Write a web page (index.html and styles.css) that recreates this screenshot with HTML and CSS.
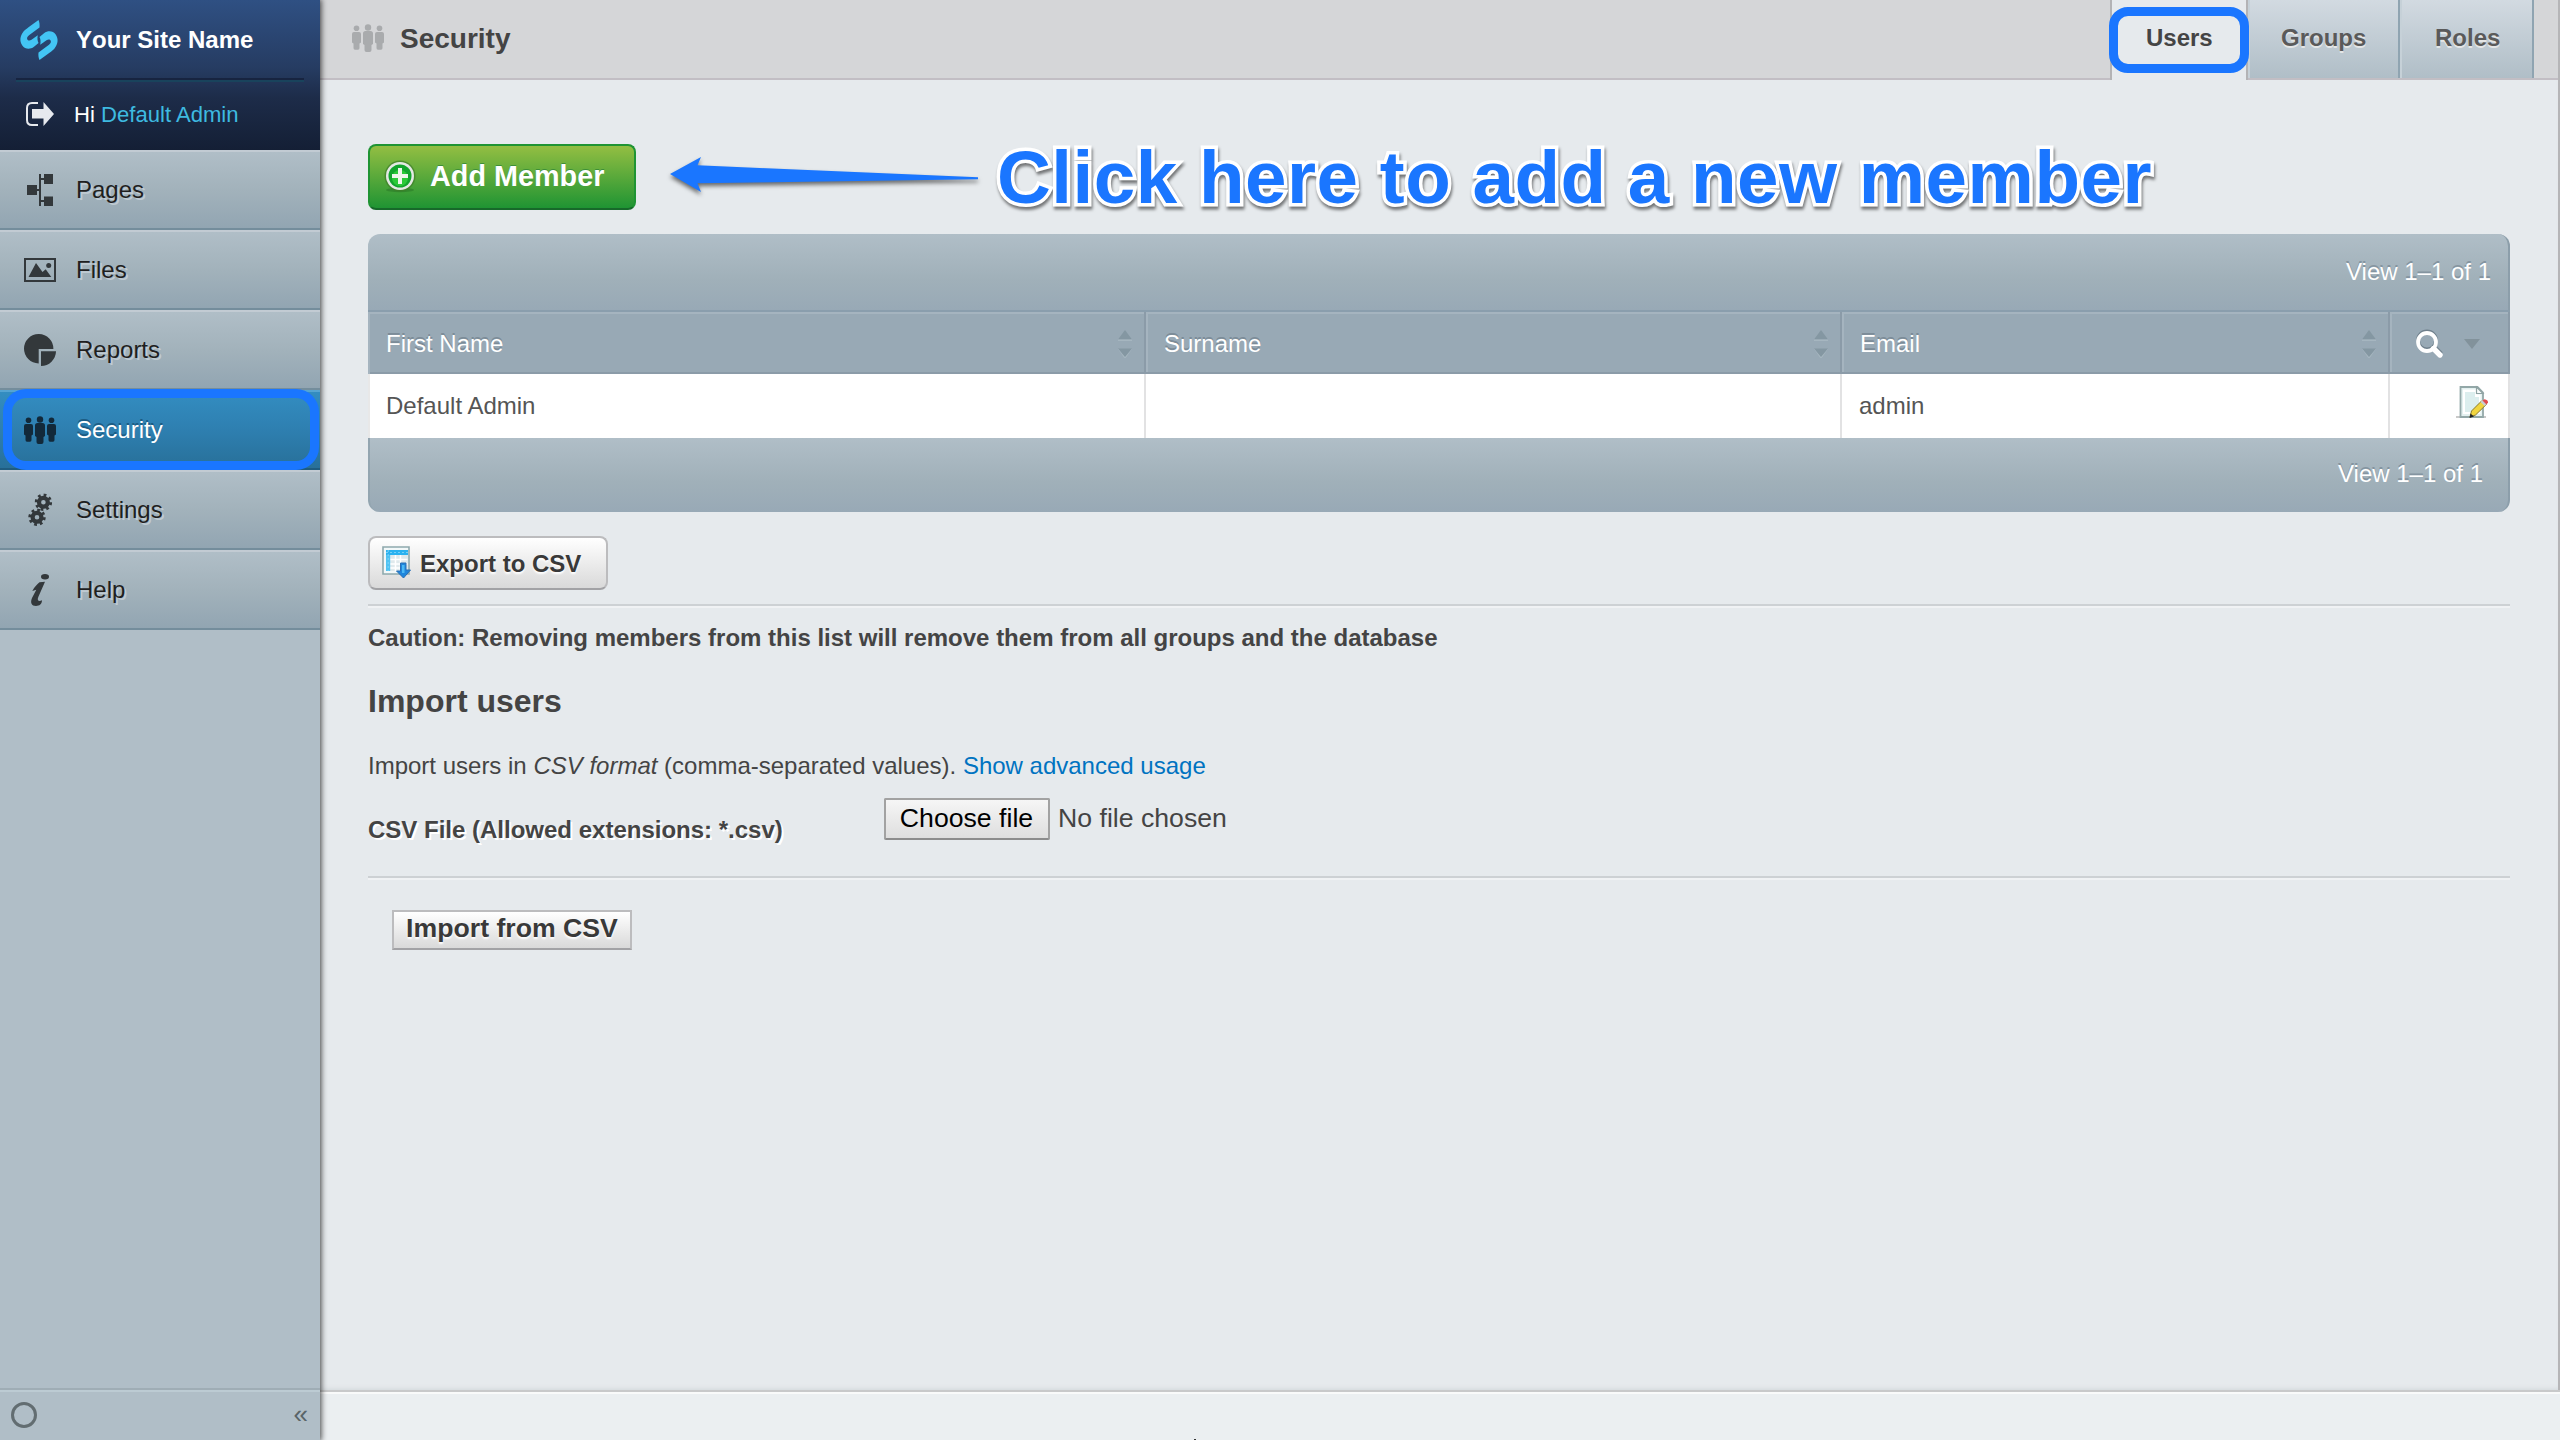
FILE: index.html
```html
<!DOCTYPE html>
<html lang="en">
<head>
<meta charset="utf-8">
<title>Security</title>
<link rel="stylesheet" href="styles.css">
</head>
<body>
<svg class="defs" width="0" height="0" aria-hidden="true">
  <symbol id="people" viewBox="0 0 32 32">
    <circle cx="4.5" cy="6.3" r="2.8"/><path d="M0 12q0-2 2-2h5q2 0 2 2v8.5l-1.5 1v4.5q0 1.7-1.5 1.7h-3q-1.500 0-1.500-1.700v-4.500l-1.500-1z"/>
    <circle cx="16" cy="5.500" r="3.200"/><path d="M11 11.500q0-2.500 2.500-2.500h5q2.500 0 2.500 2.500v10.500l-1.500 1v5q0 2-2 2h-3q-2 0-2-2v-5l-1.500-1z"/>
    <circle cx="27.500" cy="6.300" r="2.800"/><path d="M23 12q0-2 2-2h5q2 0 2 2v8.500l-1.500 1v4.500q0 1.700-1.500 1.700h-3q-1.500 0-1.500-1.700v-4.500l-1.500-1z"/>
  </symbol>
  <symbol id="sort" viewBox="0 0 14 28"><path d="M0 9.500L7 0l7 9.500z" fill="#8497a2"/><path d="M0 9.500h14v1.500H0zM0 19l7 10 7-10z" fill="#a6b6c0"/><path d="M0 18.500h14L7 27z" fill="#8497a2"/></symbol>
  <symbol id="gear" viewBox="0 0 18 18">
    <circle cx="9" cy="9" r="4.400" fill="none" stroke="#33383b" stroke-width="4.200"/>
    <circle cx="9" cy="9" r="7.200" fill="none" stroke="#33383b" stroke-width="3" stroke-dasharray="2.700 2.955"/>
  </symbol>
</svg>
<aside class="sidebar">
  <header class="brand">
    <div class="site">
      <svg class="logo" width="38" height="40" viewBox="19.500 20 38 40" fill="#43c5f4"><path id="hook" d="M38 20C39 22 39.300 25 39 27.500L28.500 35.300C24.500 38.500 27.500 42.200 31 39.800L37.300 35.300C36.600 38.600 37 41 38 43L33.500 46.700C29.500 49.800 24.500 49.200 21.800 45.500C18.800 41 19.500 36 23 31.500C24 30.300 26 28.700 28 27.200Z"/><use href="#hook" transform="rotate(180 38.500 40)"/></svg>
      <span>Your Site Name</span>
    </div>
    <div class="login">
      <svg width="30" height="26" viewBox="25 101 30 26"><path d="M38 103h-6q-5 0-5 5v12q0 5 5 5h6" fill="none" stroke="#e6e9ee" stroke-width="2"/><path d="M32 109h11.500v-7L54 114 43.500 126v-7.500H32z" fill="#e6e9ee"/></svg>
      <span>Hi <a>Default Admin</a></span>
    </div>
  </header>
  <nav class="menu">
    <a class="item"><svg viewBox="24 174 32 32"><path d="M27 185h10v10H27zM44 174h9v10h-9zM44 196.500h9v9.500h-9zM39 174h2v32h-2zM37 189h2v2h-2zM41 178h3v2h-3zM41 200h3v2h-3z"/></svg>Pages</a>
    <a class="item"><svg viewBox="24 254 32 32"><path d="M25 259h30v22H25z" fill="none" stroke="#33383b" stroke-width="2"/><path d="M28.500 277L36 263l6.500 9 3.200-2.800L51.300 277z"/><circle cx="48.700" cy="265.500" r="2.500"/></svg>Files</a>
    <a class="item"><svg viewBox="24 334 32 32"><path d="M38.700 349h14.700A14.700 14.700 0 1 0 38.700 363.400z"/><path d="M41 351.300h15A15 15 0 0 1 41 366z"/></svg>Reports</a>
    <a class="item active"><svg><use href="#people"/></svg>Security</a>
    <a class="item"><svg viewBox="24 494 32 32"><use href="#gear" x="34.400" y="493.300" width="18" height="18"/><use href="#gear" x="28" y="508.300" width="18" height="18"/></svg>Settings</a>
    <a class="item"><svg viewBox="24 574 32 32"><ellipse cx="45" cy="576.700" rx="4" ry="2.700"/><path d="M32.300 591C34.500 586.500 37.500 584 39.500 582.200L45 581.800 38.300 597C36.700 600.800 39 601.600 42 600.300C42 604 39.500 606 36 606C31.500 606 30 602.500 32 598L36.300 589.800z"/></svg>Help</a>
  </nav>
  <footer class="dock"><i class="ring"></i><span>«</span></footer>
</aside>
<div class="main">
  <header class="topbar">
    <svg class="crumb" width="32" height="32"><use href="#people"/></svg>
    <h1>Security</h1>
    <nav class="tabs"><a class="tab current">Users</a><a class="tab">Groups</a><a class="tab">Roles</a></nav>
  </header>
  <main class="content">
    <button class="btn add">
      <svg width="32" height="32" viewBox="0 0 32 32"><ellipse cx="16" cy="30" rx="14" ry="2.200" fill="#2c7a28" opacity=".6"/><circle cx="16" cy="16" r="15.500" fill="#3f7d2a" opacity=".7"/><circle cx="16" cy="16" r="14" fill="#e4e9e4"/><circle cx="16" cy="16" r="11.500" fill="#12a52d"/><circle cx="16" cy="18" r="8" fill="#2bc938"/><path d="M16 8v16M8 16h16" stroke="#eef6ec" stroke-width="4"/></svg>
      Add Member
    </button>
    <section class="grid">
      <div class="bar top">View 1–1 of 1</div>
      <div class="row head">
        <div class="cell">First Name<svg class="sort"><use href="#sort"/></svg></div>
        <div class="cell">Surname<svg class="sort"><use href="#sort"/></svg></div>
        <div class="cell">Email<svg class="sort"><use href="#sort"/></svg></div>
        <div class="cell tools">
          <svg width="28" height="30" viewBox="0 0 28 30"><g fill="none" stroke="#6f808c" stroke-width="4"><circle cx="11" cy="11.500" r="9"/><path d="M18 18l7 7" stroke-width="5"/></g><g fill="none" stroke="#fff" stroke-width="3.800"><circle cx="11" cy="13" r="9"/><path d="M17.500 19.500l6.500 6.500" stroke-width="5.400" stroke-linecap="round"/></g></svg>
          <svg width="16" height="10" viewBox="0 0 16 10"><path d="M0 0h16L8 10z" fill="#82929b"/></svg>
        </div>
      </div>
      <div class="row data">
        <div class="cell">Default Admin</div>
        <div class="cell"></div>
        <div class="cell">admin</div>
        <div class="cell edit">
          <svg width="32" height="32" viewBox="0 0 32 32"><path d="M0 31h30" stroke="#c9c9c9" stroke-width="2"/><path d="M4.500 1h17L27 6.500V31H4.500z" fill="#e4f1f0" stroke="#93a8a8" stroke-width="1.800"/><path d="M7 3.500h13.500v5h4V28H7z" fill="#fff"/><path d="M9 6h10v5h4v15H9z" fill="#dceeee"/><path d="M20.500 1v6.500H27z" fill="#f8fbfb" stroke="#8fa3a3" stroke-width="1.200"/><path d="M14 31l1.500-6L26 14.500l4.500 3.800L19.500 29z" fill="#f0d53f" stroke="#8a7a2a" stroke-width="1"/><path d="M13.500 32l1-4.500 3.500 3z" fill="#222"/><path d="M24.500 16l2-2 4.200 4-2 2z" fill="#c9ccd2"/><path d="M26.500 14.500l2-1.200q3.500.5 3.500 3.200l-1.500 2z" fill="#e14a4e"/></svg>
        </div>
      </div>
      <div class="bar foot">View 1–1 of 1</div>
    </section>
    <button class="btn export">
      <svg width="30" height="34" viewBox="0 0 30 34"><path d="M1 1h26v27H1z" fill="#f2f8f9" stroke="#8fa9ad" stroke-width="1.600"/><path d="M4 4h22v5H4z" fill="#2bb2f0"/><path d="M4 9h4.500v16H4z" fill="#4fc3f3"/><path d="M8.500 9H26v16H8.500z" fill="#dfe9ec"/><path d="M4 6.500h22M6.200 4v21" stroke="#8ad8f8" stroke-width=".8" stroke-dasharray="2 2"/><path d="M8.500 13.500h17M8.500 18h17M8.500 22h12M13.500 9v16M18.500 9v16" stroke="#fff" stroke-width="1.500"/><path d="M18.500 17h5.500v7h4.500L21.500 32 14.500 25h4z" fill="#1f86dc" stroke="#2a6fb4" stroke-width="1"/><path d="M20 19h2.500v8H20z" fill="#4cb9f5"/></svg>
      <span>Export to CSV</span>
    </button>
    <hr>
    <p class="caution">Caution: Removing members from this list will remove them from all groups and the database</p>
    <h3>Import users</h3>
    <p class="hint">Import users in <em>CSV format</em> (comma-separated values). <a>Show advanced usage</a></p>
    <div class="field">
      <label>CSV File (Allowed extensions: *.csv)</label>
      <div class="file"><button class="choose">Choose file</button><span>No file chosen</span></div>
    </div>
    <hr class="second">
    <button class="import">Import from CSV</button>
  </main>
  <footer class="status"><i></i></footer>
</div>
<div class="mark mark-users"></div>
<div class="mark mark-security"></div>
<svg class="arrow" width="320" height="50" viewBox="665 150 320 50"><path d="M670 174L701 157 697.500 165.300 978 177.300V179.300L697.500 183.300 701 192z" fill="#1a76ff"/></svg>
<div class="callout">Click here to add a new member</div>
</body>
</html>
```
FILE: styles.css
```css
* { box-sizing: border-box; }
body {
  margin: 0;
  width: 2560px;
  height: 1440px;
  display: flex;
  overflow: hidden;
  position: relative;
  font: 24px/36px "Liberation Sans", Arial, sans-serif;
  color: #444;
  background: #e6eaed;
}
.defs { position: absolute; }
svg { display: block; flex: none; overflow: visible; }
h1, h3, p { margin: 0; }
button { font-family: inherit; margin: 0; }

/* sidebar */
.sidebar {
  width: 320px;
  flex: none;
  display: flex;
  flex-direction: column;
  background: #b0bec7;
  box-shadow: 0 0 6px 1px rgba(0, 0, 0, .75);
  position: relative;
  z-index: 1;
}
.brand {
  height: 150px;
  padding: 0 16px;
  color: #fff;
  background: linear-gradient(#2f5083, #263c62 45%, #1d2c49 65%, #141f35);
}
.site {
  height: 82px;
  display: flex;
  align-items: center;
  gap: 18px;
  padding: 0 0 1px 4px;
  border-bottom: 2px solid #19435c;
  box-shadow: inset 0 -2px #172440;
  font-weight: bold;
  font-kerning: none;
}
.login {
  display: flex;
  align-items: center;
  gap: 19px;
  height: 64px;
  padding-left: 9px;
  font-size: 22.1px;
}
.login span { margin-top: 2px; }
.login a { color: #3ebae0; }
.menu { flex: 1; }
.item {
  height: 80px;
  display: flex;
  align-items: center;
  gap: 20px;
  padding-left: 24px;
  color: #1f1f1f;
  fill: #33383b;
  text-shadow: 2px 2px #bfcad2;
  border-top: 2px solid #c2cbd3;
  border-bottom: 2px solid #748d9c;
  background: linear-gradient(#b0bec7, #a2b2bb 50%, #92a5b2);
}
.item svg { width: 32px; height: 32px; }
.item.active {
  color: #fff;
  fill: #12293a;
  text-shadow: 0 -2px #1c5c84;
  border-top-color: #55a4d2;
  border-bottom-color: #1f5c80;
  background: linear-gradient(#338dc1, #2e7fb0 50%, #287099);
}
.dock {
  height: 52px;
  display: flex;
  align-items: center;
  justify-content: space-between;
  padding: 0 12px 0 11px;
  border-top: 2px solid #9fadb5;
  box-shadow: inset 0 2px #bccbd3;
  color: #596468;
  font-size: 26px;
}
.dock span { margin-top: -3px; }
.ring { width: 26px; height: 26px; border: 3px solid #626d71; border-radius: 50%; margin-top: -1px; }

/* top bar */
.main { flex: 1; min-width: 0; display: flex; flex-direction: column; }
.topbar {
  height: 80px;
  display: flex;
  align-items: center;
  padding: 0 24px 0 32px;
  border-right: 2px solid #b5b5b7;
  background: #d5d6d8;
  box-shadow: inset 0 -2px #c2bec4;
}
.crumb { fill: #a9abad; margin-top: -4px; }
h1 { font-size: 28px; line-height: 40px; margin: -3px auto 0 16px; }
.tabs { display: flex; align-self: stretch; font-weight: bold; }
.tab {
  height: 78px;
  width: 152px;
  padding-left: 31px;
  line-height: 75px;
  color: #5a5a5a;
  text-shadow: 0 2px #e4e6e6;
  border-left: 2px solid #c6d1d8;
  border-right: 2px solid #8fa4b1;
  background: linear-gradient(#d2dae1, #b0bec7);
}
.tab:last-child { width: 134px; padding-left: 33px; }
.tab.current {
  height: 80px;
  width: 138px;
  padding-left: 34px;
  color: #444;
  text-shadow: none;
  border-color: #b3b3b5;
  background: #e6eaed;
}

/* content */
.content {
  flex: 1;
  padding: 64px 48px 0;
  border-right: 2px solid #b5b5b7;
  box-shadow: inset 0 -4px 5px -3px #d2d7da;
}
.btn {
  display: flex;
  align-items: center;
  font-weight: bold;
  white-space: nowrap;
  border-radius: 8px;
}
.add {
  width: 268px;
  height: 66px;
  padding: 0 0 2px 14px;
  gap: 14px;
  font-size: 28.8px;
  color: #fff;
  border: 2px solid #1f9433;
  border-bottom-color: #17692a;
  background: linear-gradient(#93be42, #1f9433);
  text-shadow: 0 -1px #3d8f38;
}
.grid { margin-top: 24px; width: 2142px; }
.bar {
  display: flex;
  align-items: center;
  justify-content: flex-end;
  color: #fff;
  text-shadow: 0 -2px #8494a0;
  background: linear-gradient(#b0bec7, #a0b0b9 60%, #98a9b6);
  border-right: 2px solid #8c9eaa;
}
.bar.top { height: 78px; padding-right: 17px; border-radius: 12px 12px 0 0; border-bottom: 2px solid #8a9ead; }
.bar.foot { height: 74px; padding: 0 25px 3px 0; border-radius: 0 0 12px 12px; border-left: 2px solid #93a5b0; }
.row { display: grid; grid-template-columns: 778px 696px 548px 120px; }
.head {
  height: 62px;
  color: #fff;
  text-shadow: 0 -2px #7c8c98;
  border-left: 2px solid #a5b4bf;
  background: #98a9b5;
  box-shadow: inset 0 2px #a5b4bf;
  grid-template-columns: 776px 696px 548px 120px;
}
.cell { display: flex; align-items: center; }
.head .cell { padding: 3px 12px 0 16px; border-right: 2px solid #8b9ba8; border-bottom: 2px solid #8b9ba8; }
.head .cell + .cell { box-shadow: inset 2px 0 #a5b4bf; padding-left: 18px; }
.sort { width: 14px; height: 28px; margin-left: auto; }
.head .cell.tools { padding-left: 26px; gap: 20px; }
.data { height: 64px; background: #fff; color: #555; }
.data .cell { padding: 0 18px 0 17px; border-right: 2px solid #e2e2e3; }
.data .cell:first-child { border-left: 2px solid #e8e8e8; padding-left: 16px; }
.data .edit { justify-content: flex-end; padding-right: 20px; padding-bottom: 8px; }
.export {
  margin-top: 24px;
  width: 240px;
  height: 54px;
  padding: 0 0 0 12px;
  gap: 8px;
  font-size: 24px;
  color: #393939;
  text-shadow: 0 2px 2px #fff;
  border: 2px solid #bcbcbe;
  border-bottom-color: #a2a2a5;
  background: linear-gradient(#fff, #d9d9d9);
}
.export span { margin-top: 2px; }
hr { margin: 14px 0 0; width: 2142px; height: 4px; border: 0; border-top: 2px solid #cdd1d4; background: #f0f2f4; }
.caution { margin-top: 12px; font-weight: bold; }
h3 { margin-top: 25px; font-size: 32px; line-height: 40px; }
.hint { margin-top: 27px; }
.hint a { color: #0073c1; }
.field { display: flex; height: 92px; padding-top: 14px; }
.field label { width: 516px; padding-top: 14px; font-weight: bold; text-shadow: 2px 2px #fff; }
.file { display: flex; gap: 8px; font-size: 26.67px; line-height: 41px; }
.choose {
  width: 166px;
  height: 42px;
  padding: 0 1px 1px 0;
  font-size: 26.67px;
  color: #000;
  border: 2px solid #a2a2a2;
  border-bottom-color: #8c8c8c;
  border-radius: 2px;
  background: linear-gradient(#f6f6f6, #dedede);
}
hr.second { margin: 0; }
.import {
  display: block;
  margin: 30px 0 0 24px;
  width: 240px;
  height: 40px;
  padding: 0 0 3px;
  font-size: 26.67px;
  line-height: 33px;
  font-weight: bold;
  color: #393939;
  text-shadow: 0 2px 2px #fff;
  border: 2px solid #bcbcbe;
  border-bottom-color: #a2a2a5;
  background: linear-gradient(#fff, #d9d9d9);
}
.status {
  height: 50px;
  border-top: 2px solid #c8c9ca;
  box-shadow: inset 0 2px #f9fafa;
  background: #ebeff1;
  display: flex;
  align-items: flex-end;
  padding-left: 874px;
}
.status i { width: 2px; height: 1px; background: #333; }

/* annotations laid over the page */
.mark { position: absolute; z-index: 2; border: 9px solid #1a76ff; }
.mark-users { left: 2109px; top: 7px; width: 140px; height: 66px; border-radius: 19px; }
.mark-security { left: 3px; top: 389px; width: 316px; height: 81px; border-radius: 23px; }
.arrow { position: absolute; left: 665px; top: 150px; filter: drop-shadow(0 3px 2px rgba(0, 0, 0, .55)); }
.callout {
  position: absolute;
  left: 997px;
  top: 129px;
  font-size: 74.6px;
  line-height: 96px;
  font-weight: bold;
  white-space: nowrap;
  letter-spacing: .5px;
  color: #1a76ff;
  -webkit-text-stroke: 7px #fff;
  paint-order: stroke fill;
  stroke-linejoin: round;
  filter: drop-shadow(1px 3px 1.5px rgba(0, 0, 0, .5));
}
```
